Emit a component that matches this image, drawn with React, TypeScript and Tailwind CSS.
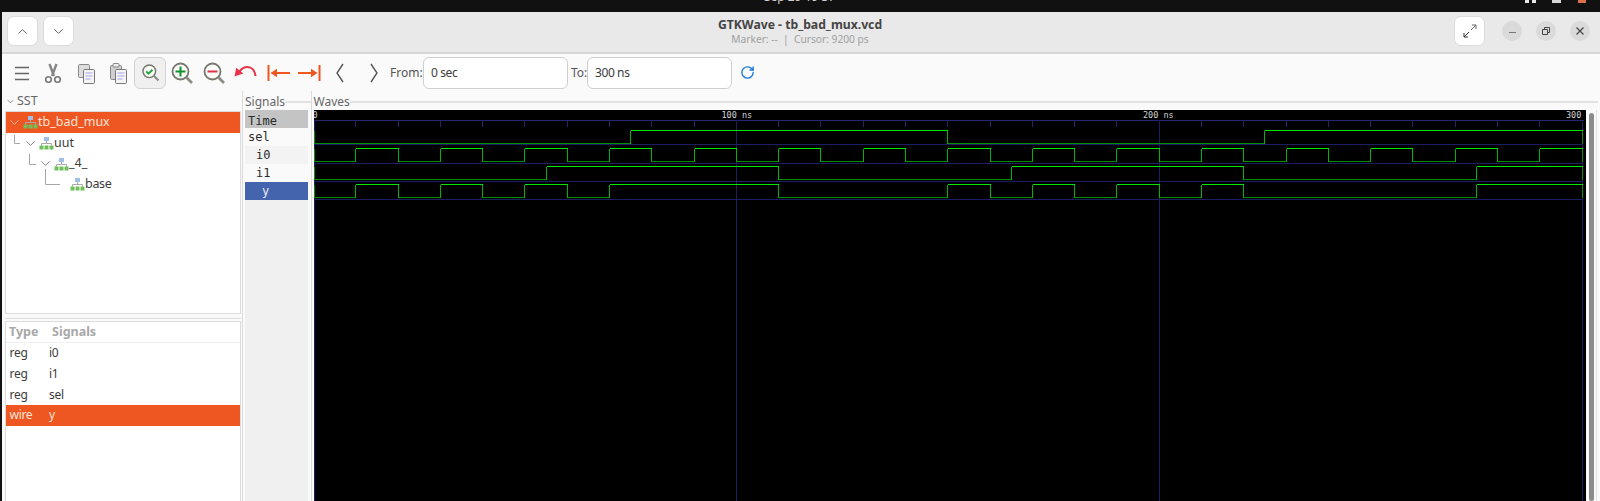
import React from "react";
import { RotateCw, ChevronUp, ChevronDown } from "lucide-react";

const UI = "font-['Noto_Sans',sans-serif]";
const MONO = "font-['DejaVu_Sans_Mono',monospace]";

/* ---------- toolbar drawings ---------- */
const Doc = ({ x, y, fill = "#f4f4f4" }: { x: number; y: number; fill?: string }) => (
  <rect x={x} y={y} width="11" height="14" rx="1.2" fill={fill} stroke="#777" strokeWidth="1" />
);
const Lines = ({ x, y }: { x: number; y: number }) => (
  <g stroke="#a5a5ea" strokeWidth="1">
    <path d={`M${x} ${y}h7M${x} ${y + 3}h7M${x} ${y + 6}h5`} />
  </g>
);
const Menu = () => (
  <svg width="24" height="24" viewBox="0 0 24 24"><path d="M5 6.5h14M5 12.5h14M5 18.5h14" stroke="#666" strokeWidth="1.6" /></svg>
);
const Scissors = () => (
  <svg width="24" height="24" viewBox="0 0 24 24" fill="none">
    <path d="M8.5 3 13 15M15.5 3 11 15" stroke="#858585" strokeWidth="2.4" />
    <circle cx="7.5" cy="18.5" r="2.8" stroke="#777" strokeWidth="1.6" />
    <circle cx="16.5" cy="18.5" r="2.8" stroke="#777" strokeWidth="1.6" />
  </svg>
);
const Copy = () => (
  <svg width="24" height="24" viewBox="0 0 24 24">
    <rect x="4.5" y="3.5" width="11" height="13" rx="1.2" fill="#ddd" stroke="#888" />
    <Doc x={9.5} y={8.5} />
    <Lines x={11.5} y={12} />
  </svg>
);
const Paste = () => (
  <svg width="24" height="24" viewBox="0 0 24 24">
    <rect x="4.5" y="4.5" width="11" height="14" rx="1.2" fill="#cfcfcf" stroke="#888" />
    <rect x="7" y="2.5" width="6" height="3.5" rx="1" fill="#eee" stroke="#888" />
    <Doc x={9.5} y={8.5} />
    <Lines x={11.5} y={12} />
  </svg>
);
const Glass = ({ children, size = 24 }: { children?: React.ReactNode; size?: number }) => (
  <svg width={size} height={size} viewBox="0 0 24 24" fill="none">
    <circle cx="10.5" cy="10.5" r="8" fill="#fbfbf8" stroke="#77776f" strokeWidth="1.8" />
    <path d="M16.5 16.5 22 22" stroke="#8a8a82" strokeWidth="2.6" />
    {children}
  </svg>
);
const Undo = () => (
  <svg width="24" height="24" viewBox="0 0 24 24" fill="none">
    <path d="M22.5 17c-.6-5.4-3.8-9-8-9-3.3 0-6 1.7-8 4.6" stroke="#e8344a" strokeWidth="2.2" />
    <path d="M1.5 17.5 3.2 8.8 10.3 14.6Z" fill="#e8344a" />
  </svg>
);
const First = () => (
  <svg width="26" height="24" viewBox="0 0 26 24" fill="none">
    <path d="M3.5 4v16" stroke="#f0561e" strokeWidth="2" />
    <path d="M10 12h15" stroke="#f0561e" strokeWidth="2" />
    <path d="M5.5 12 12 7.8v8.4Z" fill="#f0561e" />
  </svg>
);
const Last = () => (
  <svg width="26" height="24" viewBox="0 0 26 24" fill="none">
    <path d="M22.5 4v16" stroke="#f0561e" strokeWidth="2" />
    <path d="M1 12h15" stroke="#f0561e" strokeWidth="2" />
    <path d="M20.5 12 14 7.8v8.4Z" fill="#f0561e" />
  </svg>
);
const Tall = ({ flip }: { flip?: boolean }) => (
  <svg width="12" height="22" viewBox="0 0 12 22" fill="none">
    <path d={flip ? "M3 2l6 9-6 9" : "M9 2l-6 9 6 9"} stroke="#555" strokeWidth="1.4" />
  </svg>
);
const Cell = ({ children }: { children: React.ReactNode }) => (
  <div className="flex h-[32px] w-[32px] shrink-0 items-center justify-center">{children}</div>
);

/* ---------- tree ---------- */
const Hier = () => (
  <svg width="15" height="14" viewBox="0 0 15 14" className="shrink-0">
    <path d="M7.5 4v4M2.5 9.5V7.5h10v2" stroke="#a8a8a8" fill="none" />
    <rect x="5" y="1" width="5" height="4" fill="#9fbfe6" />
    <rect x="0.5" y="9.5" width="4" height="4" fill="#6fc05a" />
    <rect x="5.5" y="9.5" width="4" height="4" fill="#6fc05a" />
    <rect x="10.5" y="9.5" width="4" height="4" fill="#6fc05a" />
  </svg>
);
const Chev = ({ light }: { light?: boolean }) => (
  <ChevronDown size={15} strokeWidth={1.3} color={light ? "#ffd2bd" : "#666"} className="shrink-0" />
);
const Elbow = ({ w, h, cls }: { w: number; h: number; cls: string }) => (
  <svg width={w} height={h} className={`shrink-0 ${cls}`}>
    <path d={`M0.5 0V${h - 0.5}H${w}`} stroke="#a6a6a6" fill="none" />
  </svg>
);

/* ---------- waves ---------- */
const PX = 4.2287;
const px = (ns: number) => (ns === 0 ? 0.5 : Math.round(ns * PX) - 0.5);
const i0Edges: number[] = [];
for (let t = 10; t < 300; t += 10) i0Edges.push(t);
const SIGNALS = [
  { hi: 20.5, lo: 33.5, edges: [75, 150, 225] },
  { hi: 38.5, lo: 51.5, edges: i0Edges },
  { hi: 56.5, lo: 69.5, edges: [55, 110, 165, 220, 275] },
  { hi: 74.5, lo: 87.5, edges: [10, 20, 30, 40, 50, 60, 70, 110, 150, 160, 170, 180, 190, 200, 210, 220, 275] },
];
const Wave = ({ hi, lo, edges }: { hi: number; lo: number; edges: number[] }) => {
  const parts: React.ReactNode[] = [];
  const pts = [0, ...edges, 300];
  for (let i = 0; i < pts.length - 1; i++) {
    const high = i % 2 === 1;
    parts.push(
      <path key={"h" + i} d={`M${px(pts[i])} ${high ? hi : lo}H${px(pts[i + 1])}`} stroke={high ? "#00e800" : "#008f00"} />
    );
    if (i > 0) parts.push(<path key={"v" + i} d={`M${px(pts[i])} ${hi}V${lo}`} stroke="#00b400" />);
  }
  parts.push(<path key="s" d={`M${px(0)} ${hi}V${lo}`} stroke="#009000" />);
  parts.push(<path key="e" d={`M${px(300)} ${hi}V${lo}`} stroke="#009000" />);
  return <g>{parts}</g>;
};
const Waves = () => {
  const ticks: number[] = [];
  for (let t = 0; t <= 300; t += 10) ticks.push(t);
  return (
    <svg width="1272" height="391" viewBox="0 0 1272 391" className="block" shapeRendering="crispEdges">
      <rect width="1272" height="391" fill="#000" />
      <path d="M0 10.5H1270" stroke="#26266e" />
      {ticks.map((t) => (
        <path key={t} d={`M${px(t)} 10V17`} stroke="#26266e" />
      ))}
      {[0, 100, 200, 300].map((t) => (
        <path key={t} d={`M${px(t)} 10V391`} stroke="#1e1e62" />
      ))}
      {[34.5, 53, 71.5, 89.5].map((y) => (
        <path key={y} d={`M0 ${Math.floor(y) + 0.5}H${px(300)}`} stroke="#1e1e62" />
      ))}
      {SIGNALS.map((s, i) => (
        <Wave key={i} {...s} />
      ))}
      <g fill="#d4d4d4" fontSize="8.5" fontFamily="'DejaVu Sans Mono', monospace" shapeRendering="auto">
        <text x="-1.5" y="7.5">0</text>
        <text x="407.5" y="7.5">100 ns</text>
        <text x="829" y="7.5">200 ns</text>
        <text x="1252" y="7.5">300</text>
      </g>
    </svg>
  );
};

const Input = ({ v }: { v: string }) => (
  <div className="flex h-[32px] w-[145px] shrink-0 items-center rounded-[6px] border border-[#cfcfcf] bg-white pl-[7px] text-[12px] tracking-[-0.4px] text-[#3a3a3a]">{v}</div>
);
const HeadBtn = ({ children }: { children: React.ReactNode }) => (
  <div className="flex h-[30px] w-[31px] items-center justify-center rounded-[7px] border border-[#dcdcdc] bg-white">{children}</div>
);
const Circle = ({ children }: { children: React.ReactNode }) => (
  <div className="flex h-[20px] w-[20px] items-center justify-center rounded-full bg-[#dadada]">{children}</div>
);

const SigRow = ({ t, pl, cls }: { t: string; pl: string; cls: string }) => (
  <div className={`flex items-center ${pl} ${cls}`}>{t}</div>
);
const TypeRow = ({ a, b, sel }: { a: string; b: string; sel?: boolean }) => (
  <div className={`flex h-[20.7px] items-center pl-[3.5px] text-[12px] tracking-[-0.3px] ${sel ? "bg-[#ee5722] text-[#fbe3d8]" : "text-[#3c3c3c]"}`}>
    <span className="w-[39.5px]">{a}</span>
    <span>{b}</span>
  </div>
);

export default function App() {
  return (
    <div className={`flex h-[501px] w-[1600px] flex-col overflow-hidden bg-[#111111] ${UI}`}>
      {/* system bar */}
      <div className="flex h-[12px] shrink-0 overflow-hidden">
        <div className="-mt-[11px] ml-[764px] w-[100px] text-[12px] leading-[16px] text-[#cfcfcf]">Sep 29  19 37</div>
        <div className="ml-[661px] flex h-[3px] gap-[3px]">
          <div className="h-[3px] w-[4px] bg-[#e8e8e8]" />
          <div className="h-[3px] w-[4px] bg-[#e8e8e8]" />
        </div>
        <div className="ml-[16px] h-[3px] w-[9px] bg-[#d8d8d8]" />
        <div className="ml-[17px] h-[3px] w-[8px] bg-[#d9704a]" />
      </div>

      {/* window */}
      <div className="ml-[2px] flex min-h-0 flex-1 flex-col bg-[#fafafa]">
        {/* title bar */}
        <div className="flex h-[42px] shrink-0 items-center border-b-2 border-[#d6d6d6] bg-[#e9e9e9] pb-[2px] pl-[5px] pr-[10px]">
          <div className="flex flex-1 gap-[5px]">
            <HeadBtn><ChevronUp size={15} strokeWidth={1.5} color="#555" /></HeadBtn>
            <HeadBtn><ChevronDown size={15} strokeWidth={1.5} color="#555" /></HeadBtn>
          </div>
          <div className="flex flex-col items-center pl-[3px]">
            <div className="text-[12.2px] font-bold leading-[17px] text-[#444]">GTKWave - tb_bad_mux.vcd</div>
            <div className="whitespace-pre text-[10.2px] leading-[13px] text-[#a0a0a0]">Marker: --  |  Cursor: 9200 ps</div>
          </div>
          <div className="flex flex-1 items-center justify-end">
            <HeadBtn>
              <svg width="14" height="14" viewBox="0 0 14 14" fill="none">
                <path d="M8 6l5-5M9 1h4v4" stroke="#666" />
                <path d="M6 8l-5 5M1 9v4h4" stroke="#333" />
              </svg>
            </HeadBtn>
            <div className="ml-[17px] flex gap-[14px]">
              <Circle><div className="mt-[3px] h-[1.5px] w-[7px] bg-[#777]" /></Circle>
              <Circle>
                <svg width="10" height="10" viewBox="0 0 10 10" fill="none"><path d="M1.5 3.5h5v5h-5zM3.5 3.5v-2h5v5h-2" stroke="#444" /></svg>
              </Circle>
              <Circle>
                <svg width="10" height="10" viewBox="0 0 10 10" fill="none"><path d="M1.5 1.5l7 7M8.5 1.5l-7 7" stroke="#444" strokeWidth="1.2" /></svg>
              </Circle>
            </div>
          </div>
        </div>

        {/* toolbar */}
        <div className="flex h-[37px] shrink-0 items-center pl-[4px] text-[#444]">
          <Cell><Menu /></Cell>
          <Cell><div className="mr-[3px]"><Scissors /></div></Cell>
          <Cell><div className="mr-[1px]"><Copy /></div></Cell>
          <Cell><Paste /></Cell>
          <div className="flex h-[32px] w-[32px] shrink-0 items-center justify-center rounded-[6px] border border-[#d2d2d2] bg-[#f0f0f0]">
            <Glass size={19}><path d="M6.5 10.5l3 3 5-5" stroke="#22a53a" strokeWidth="2.4" /></Glass>
          </div>
          <Cell><Glass><path d="M5.5 10.5h10M10.5 5.5v10" stroke="#13912f" strokeWidth="2" /></Glass></Cell>
          <Cell><Glass><path d="M5.5 10.5h10" stroke="#d8324a" strokeWidth="2" /></Glass></Cell>
          <Cell><div className="mb-[4px] mr-[3px]"><Undo /></div></Cell>
          <Cell><First /></Cell>
          <Cell><Last /></Cell>
          <Cell><div className="mr-[4px]"><Tall /></div></Cell>
          <Cell><Tall flip /></Cell>
          <span className="w-[33px] text-[12px] text-[#555]">From:</span>
          <Input v="0 sec" />
          <span className="ml-[3px] w-[16px] text-[12px] text-[#555]">To:</span>
          <Input v="300 ns" />
          <div className="ml-[8px]"><RotateCw size={15} strokeWidth={2.2} color="#1f7ad6" /></div>
        </div>

        {/* panes */}
        <div className="flex min-h-0 flex-1">
          {/* left */}
          <div className="flex w-[240px] shrink-0 flex-col pl-[3px] pr-[1px]">
            <div className="flex h-[20px] shrink-0 items-center gap-[1px] text-[12.5px] text-[#666]">
              <ChevronDown size={11} strokeWidth={1.5} color="#666" />
              <span>SST</span>
            </div>
            <div className="h-[203px] shrink-0 border-[1.5px] border-[#dcdcdc] bg-white text-[12.5px] text-[#3c3c3c]">
              <div className="flex h-[20.7px] items-center bg-[#ee5722] pl-[1px] text-[#fbe3d8]">
                <Chev light />
                <div className="ml-[0.5px]"><Hier /></div>
                <span className="ml-[0.5px]">tb_bad_mux</span>
              </div>
              <div className="flex h-[20.7px] items-center pl-[8px]">
                <Elbow w={6} h={9} cls="-mt-[7px]" />
                <div className="ml-[2.5px]"><Chev /></div>
                <div className="ml-[1.5px]"><Hier /></div>
                <span>uut</span>
              </div>
              <div className="flex h-[20.7px] items-center pl-[22.5px]">
                <Elbow w={7} h={11} cls="-mt-[9px]" />
                <div className="ml-[2.5px]"><Chev /></div>
                <div className="ml-[0.5px]"><Hier /></div>
                <span className="ml-[0.5px]">_4_</span>
              </div>
              <div className="flex h-[20.7px] items-center pl-[38.5px]">
                <Elbow w={15} h={16} cls="-mt-[14px]" />
                <div className="ml-[10px]"><Hier /></div>
                <span className="ml-[0.5px] tracking-[-0.3px]">base</span>
              </div>
            </div>
            <div className="h-[5px] shrink-0 border-b border-[#dcdcdc]" />
            <div className="mt-[2px] min-h-0 flex-1 border-[1.5px] border-b-0 border-[#dcdcdc] bg-white">
              <div className="flex h-[21px] items-center border-b border-[#f0f0f0] pl-[3px] text-[12.5px] font-bold text-[#a8a8a8]">
                <span className="w-[43px]">Type</span>
                <span>Signals</span>
              </div>
              <TypeRow a="reg" b="i0" />
              <TypeRow a="reg" b="i1" />
              <TypeRow a="reg" b="sel" />
              <TypeRow a="wire" b="y" sel />
            </div>
          </div>

          {/* signals */}
          <div className="flex w-[69px] shrink-0 flex-col border-l-[1.5px] border-[#dcdcdc] pl-[2px]">
            <div className="flex h-[19px] shrink-0 items-center pt-[3px]">
              <span className="text-[12px] text-[#666]">Signals</span>
              <div className="h-[2px] flex-1 bg-[#e2e2e2]" />
            </div>
            <div className={`flex w-[63px] flex-1 flex-col bg-[#f0f0f0] text-[12px] text-[#2a2a2a] ${MONO}`}>
              <SigRow t="Time" pl="pl-[3px] pt-[4px]" cls="h-[17.5px] bg-[#c4c4c4]" />
              <SigRow t="sel" pl="pl-[3px]" cls="h-[18px] bg-[#fafafa]" />
              <SigRow t="i0" pl="pl-[11px]" cls="h-[18px] bg-[#f3f3f3]" />
              <SigRow t="i1" pl="pl-[11px]" cls="h-[18.5px] bg-[#fafafa]" />
              <SigRow t="y" pl="pl-[17px]" cls="h-[17.5px] bg-[#4464ad] text-[#e8ecf6]" />
            </div>
          </div>

          {/* waves */}
          <div className="flex min-w-0 flex-1 flex-col border-l-[1.5px] border-[#dcdcdc] pl-[1.5px]">
            <div className="flex h-[19px] shrink-0 items-center pr-[2px] pt-[3px]">
              <span className="text-[12px] text-[#666]">Waves</span>
              <div className="h-[2px] flex-1 bg-[#e2e2e2]" />
            </div>
            <div className="flex min-h-0 flex-1">
              <Waves />
              <div className="ml-[3px] h-full w-[5px] pt-[3px]">
                <div className="h-full w-[5px] rounded-full bg-[#8c8c8c]" />
              </div>
              <div className="ml-[2px] h-full w-[1.5px] bg-[#e2e2e2]" />
            </div>
          </div>
        </div>
      </div>
    </div>
  );
}
